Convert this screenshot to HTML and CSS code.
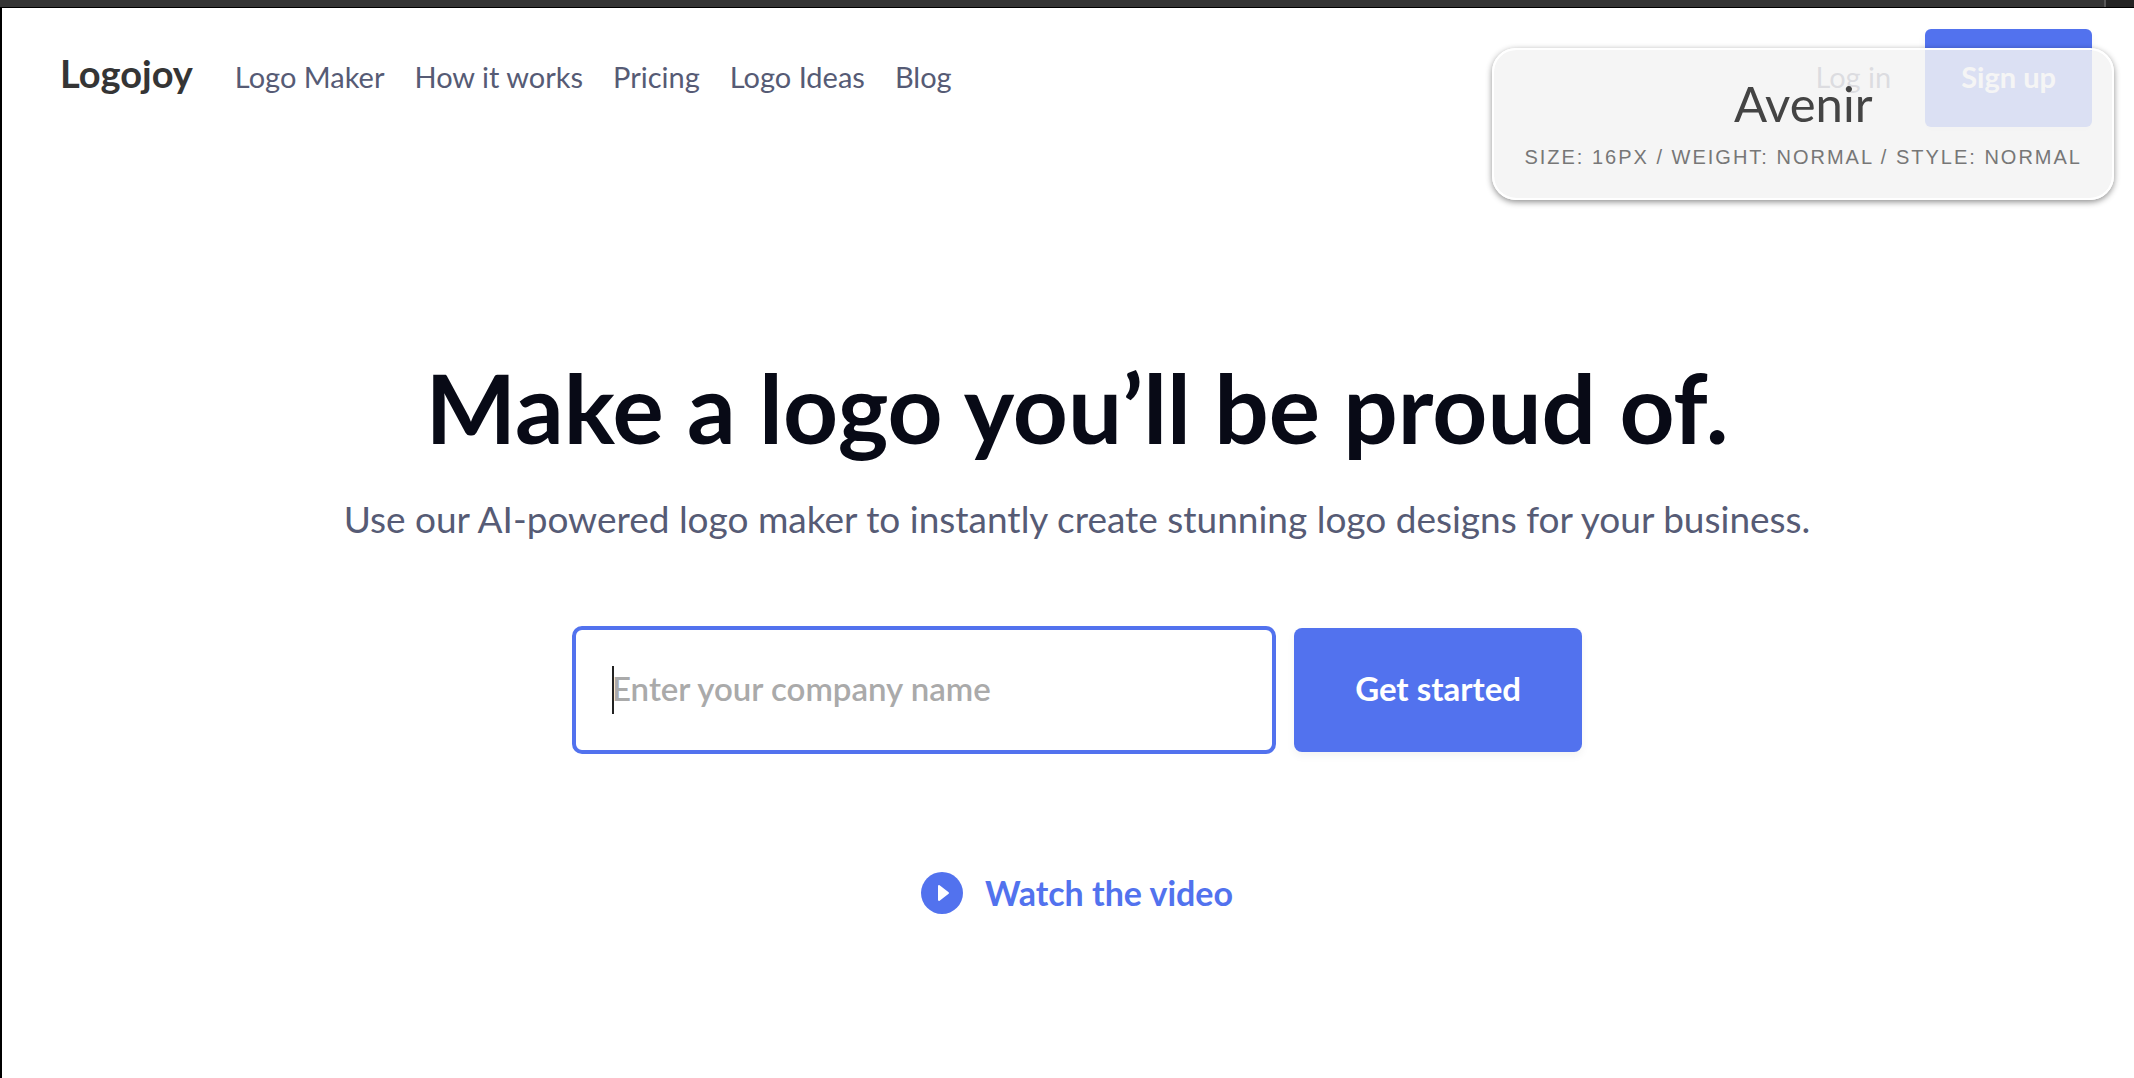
FILE: index.html
```html
<!DOCTYPE html>
<html lang="en">
<head>
  <meta charset="utf-8">
  <meta name="viewport" content="width=device-width, initial-scale=1">
  <title>Logojoy</title>
  <link rel="stylesheet" href="styles.css">
</head>
<body>
  <div class="window-bar"><span class="window-bar-end"></span></div>
  <div class="page">
    <header class="header">
      <a class="logo" href="#">Logojoy</a>
      <nav class="nav">
        <a href="#">Logo Maker</a>
        <a href="#">How it works</a>
        <a href="#">Pricing</a>
        <a href="#">Logo Ideas</a>
        <a href="#">Blog</a>
      </nav>
      <div class="account">
        <a class="login" href="#">Log in</a>
        <button class="button signup" type="button">Sign up</button>
      </div>
    </header>

    <main class="hero">
      <h1 class="title">Make a logo you’ll be proud of.</h1>
      <p class="subtitle">Use our AI-powered logo maker to instantly create stunning logo designs for your business.</p>
      <form class="form">
        <div class="field">
          <input class="input" type="text" aria-label="Company name" placeholder="Enter your company name">
          <span class="caret"></span>
        </div>
        <button class="button submit" type="button">Get started</button>
      </form>
      <a class="video" href="#">
        <svg class="video-icon" viewBox="0 0 42 42" aria-hidden="true">
          <circle cx="21" cy="21" r="21" fill="#5272ee"/>
          <path d="M18 14 L27 21 L18 28 Z" fill="#fff" stroke="#fff" stroke-width="2" stroke-linejoin="round"/>
        </svg>
        Watch the video
      </a>
    </main>
  </div>

  <aside class="font-card">
    <div class="font-name">Avenir</div>
    <div class="font-info">Size: 16px / Weight: normal / Style: normal</div>
  </aside>
</body>
</html>
```
FILE: styles.css
```css
* {
  box-sizing: border-box;
}

body {
  margin: 0;
  min-height: 100vh;
  display: flex;
  flex-direction: column;
  position: relative;
  background: #fff;
  color: #565b75;
  font-family: Lato, "Open Sans", sans-serif;
  font-size: 29px;
}

a {
  color: inherit;
  text-decoration: none;
  white-space: nowrap;
}

.window-bar {
  display: flex;
  justify-content: flex-end;
  height: 8px;
  background: #353535;
  border-bottom: 1px solid #000;
}

.window-bar-end {
  width: 30px;
  background: #242424;
  border-left: 2px solid #585858;
}

.page {
  flex: 1;
  border-left: 2px solid #000;
}

/* Header */
.header {
  display: flex;
  align-items: baseline;
  padding: 21px 42px 0 58px;
}

.logo {
  margin-right: 42px;
  color: #353535;
  font-size: 38px;
  font-weight: 700;
}

.nav {
  display: flex;
  gap: 30px;
}

.account {
  display: flex;
  align-items: baseline;
  gap: 34px;
  margin-left: auto;
}

.button {
  border: 0;
  border-radius: 6px;
  background: #5272ee;
  box-shadow: 0 4px 8px rgba(0, 0, 0, 0.05);
  color: #fff;
  font-family: inherit;
  font-weight: 700;
  white-space: nowrap;
}

.signup {
  height: 98px;
  padding: 0 36px 4px;
  font-size: 29px;
}

/* Hero */
.hero {
  display: flex;
  flex-direction: column;
  align-items: center;
  padding: 220px 0 80px 18px;
}

.title {
  margin: 0;
  color: #080a16;
  font-size: 96px;
  font-weight: 700;
  line-height: 120px;
  text-align: center;
}

.subtitle {
  margin: 30px 0 0;
  font-size: 37px;
  line-height: 44px;
  text-align: center;
}

.form {
  display: flex;
  align-items: center;
  gap: 18px;
  width: 100%;
  max-width: 1010px;
  margin-top: 85px;
}

.field {
  flex: 1;
  position: relative;
}

.input {
  display: block;
  width: 100%;
  height: 128px;
  padding: 0 36px 4px;
  border: 4px solid #5272ee;
  border-radius: 10px;
  outline: 0;
  background: #fff;
  color: #353535;
  font-family: inherit;
  font-size: 33px;
  font-weight: 600;
}

.input::placeholder {
  color: #aaa;
  opacity: 1;
}

.caret {
  position: absolute;
  top: 40px;
  left: 40px;
  width: 2px;
  height: 48px;
  background: #222;
}

.submit {
  height: 124px;
  padding: 0 61px 4px;
  border-radius: 8px;
  font-size: 33px;
}

.video {
  display: flex;
  align-items: center;
  gap: 22px;
  margin-top: 118px;
  color: #5272ee;
  font-size: 34px;
  font-weight: 700;
  line-height: 42px;
}

.video-icon {
  width: 42px;
  height: 42px;
}

/* Floating font details */
.font-card {
  position: absolute;
  top: 48px;
  right: 20px;
  padding: 25px 30px 29px;
  border: 2px solid #fff;
  border-radius: 24px;
  background: rgba(243, 243, 243, 0.85);
  background-clip: padding-box;
  box-shadow: 0 2px 6px rgba(0, 0, 0, 0.45);
  text-align: center;
  white-space: nowrap;
}

.font-name {
  color: #444;
  font-size: 49px;
  line-height: 56px;
}

.font-info {
  margin-top: 14px;
  color: #777;
  font-family: "Liberation Sans", Arial, sans-serif;
  font-size: 20px;
  letter-spacing: 2px;
  line-height: 24px;
  text-transform: uppercase;
}
```
